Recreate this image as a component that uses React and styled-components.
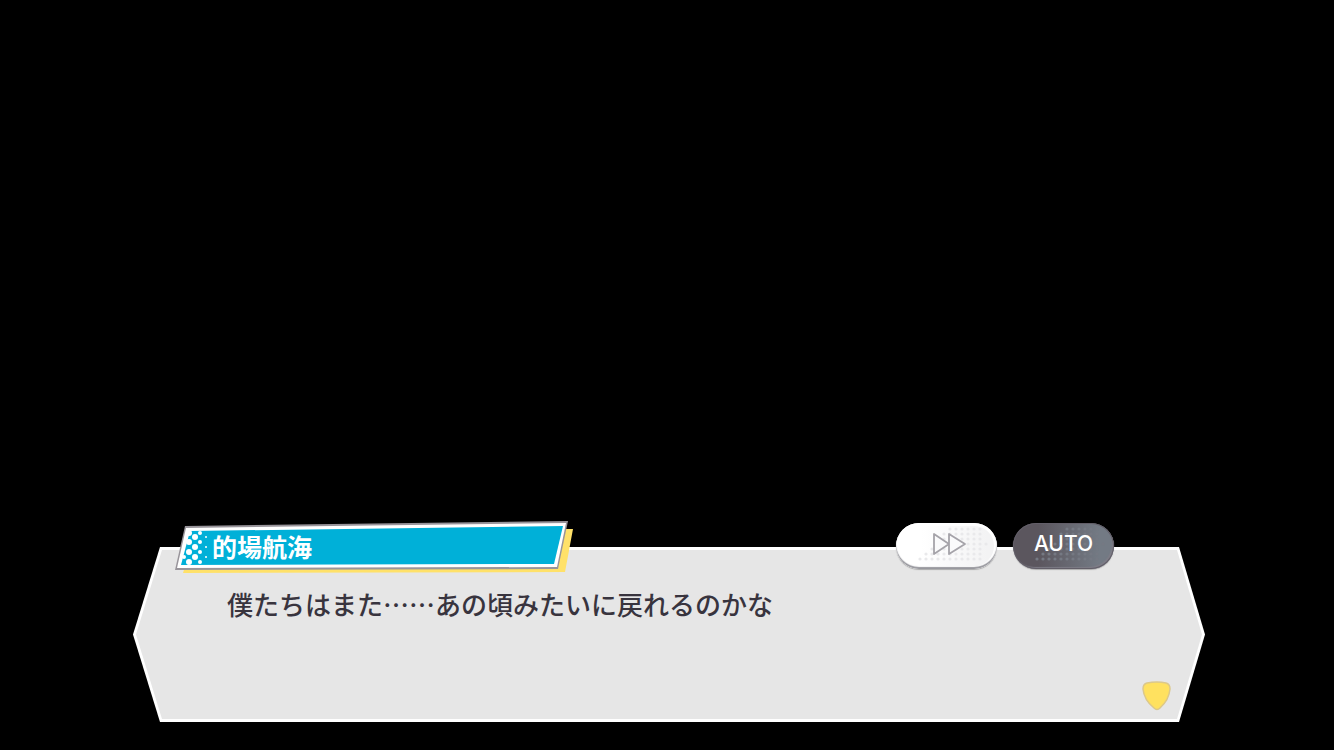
import styled, { createGlobalStyle } from 'styled-components';

const GlobalStyle = createGlobalStyle`
  * {
    box-sizing: border-box;
  }

  body {
    margin: 0;
    background: #000;
    font-family: 'Noto Sans CJK JP', 'Noto Sans', sans-serif;
  }
`;

const Stage = styled.main`
  display: flex;
  flex-direction: column;
  justify-content: flex-end;
  min-height: 100vh;
  padding: 0 129px 28px 133px;
`;

const Dialogue = styled.section`
  display: flex;
  flex-direction: column;
`;

const DialogueHeader = styled.header`
  position: relative;
  z-index: 1;
  display: flex;
  justify-content: space-between;
  align-items: flex-start;
  margin-bottom: -27px;
  padding: 0 91px 0 42px;
`;

const NamePlate = styled.div`
  position: relative;
  flex: 0 1 398px;
  height: 53px;
`;

const PlateLayer = styled.div`
  position: absolute;
  inset: 0;
  background: ${({ $color }) => $color};
  clip-path: polygon(${({ $shape }) => $shape});
`;

const PlateDots = styled.svg`
  position: absolute;
  left: 0;
  top: 0;
  width: 40px;
  height: 53px;
`;

const Speaker = styled.h2`
  position: relative;
  margin: 0;
  padding-left: 37px;
  font-size: 25px;
  font-weight: 700;
  line-height: 50px;
  color: #fff;
`;

const Controls = styled.div`
  display: flex;
  gap: 16px;
  padding-top: 2px;
`;

const ControlButton = styled.button`
  position: relative;
  width: 101px;
  height: 46px;
  padding: 0 0 4px;
  border: none;
  border-radius: 23px;
  overflow: hidden;
  font-family: Inter, sans-serif;
  font-size: 21px;
  font-weight: 500;
  line-height: 40px;
  color: #fff;
  background: ${({ $dark }) =>
    $dark ? 'linear-gradient(90deg, #5b565e 25%, #737a84 85%)' : 'linear-gradient(90deg, #fff 25%, #f3f3f4 90%)'};
  box-shadow: ${({ $dark }) =>
    $dark
      ? 'inset 0 0 0 1px #625e68, inset -2px -2px 1px #7d7c86, 0 1px 1px #aaa'
      : 'inset 0 -2px 1px #98989e, inset 0 0 0 3px #fff, 0 1px 1px #aaa'};
  cursor: pointer;
`;

const ButtonArt = styled.svg`
  position: absolute;
  inset: 0;
  width: 100%;
  height: 100%;
`;

const ButtonText = styled.span`
  position: relative;
`;

const Frame = styled.div`
  min-height: 175px;
  padding: 3px;
  background: #fff;
  clip-path: polygon(27px 0, calc(100% - 26px) 0, 100% 50%, calc(100% - 26px) 100%, 27px 100%, 0 50%);
`;

const FrameBody = styled.div`
  display: flex;
  flex-direction: column;
  justify-content: space-between;
  min-height: 169px;
  padding: 35px 30px 8px 91px;
  background: #e6e6e6;
  clip-path: polygon(26px 0, calc(100% - 25px) 0, 100% 50%, calc(100% - 25px) 100%, 26px 100%, 0 50%);
`;

const Line = styled.p`
  margin: 0;
  font-size: 26px;
  font-weight: 500;
  line-height: 38px;
  color: #38343e;
`;

const NextButton = styled.button`
  align-self: flex-end;
  width: 30px;
  height: 30px;
  padding: 0;
  border: none;
  background: none;
  cursor: pointer;

  svg {
    display: block;
  }
`;

const shapes = {
  shadow: '18px 20px, calc(100% - 20px) 8px, 100% 8px, calc(100% - 8px) 51px, 8px 52px',
  outline: '10px 5px, calc(100% - 5px) 0, calc(100% - 15px) 48px, 0 49px',
  border: '11px 7px, calc(100% - 7px) 2px, calc(100% - 16px) 46px, 2px 47px',
  fill: '15px 10px, calc(100% - 10px) 5px, calc(100% - 19px) 43px, 6px 44px',
};

const plateColumns = [
  { x: 9, r: 2, ys: [36] },
  { x: 14, r: 3, ys: [12, 21, 31, 41] },
  { x: 20, r: 3, ys: [16, 26, 36] },
  { x: 25, r: 2, ys: [12, 21, 31, 41] },
  { x: 31, r: 1, ys: [16, 26, 36] },
];

// Halftone band that climbs from the lower left to the upper right of a button
const buttonDots = [];
for (let row = 0; row < 7; row += 1) {
  for (let col = 0; col < 12; col += 1) {
    const x = 24 + col * 6;
    const y = 6 + row * 5;
    if (x > 52 - row * 5 && x < 92 - Math.abs(row - 3) * 2) buttonDots.push({ x, y });
  }
}

function HalftoneArt({ color, children }) {
  return (
    <ButtonArt viewBox="0 0 101 46" aria-hidden="true">
      <g fill={color}>
        {buttonDots.map(({ x, y }) => (
          <circle key={`${x}-${y}`} cx={x} cy={y} r="1.6" />
        ))}
      </g>
      {children}
    </ButtonArt>
  );
}

function App() {
  return (
    <>
      <GlobalStyle />
      <Stage>
        <Dialogue>
          <DialogueHeader>
            <NamePlate>
              <PlateLayer $color="#ffe169" $shape={shapes.shadow} />
              <PlateLayer $color="#98949a" $shape={shapes.outline} />
              <PlateLayer $color="#fff" $shape={shapes.border} />
              <PlateLayer $color="#00b0d8" $shape={shapes.fill} />
              <PlateDots viewBox="0 0 40 53" aria-hidden="true">
                {plateColumns.map(({ x, r, ys }) =>
                  ys.map((y) => <circle key={`${x}-${y}`} cx={x} cy={y} r={r} fill="#fff" />)
                )}
              </PlateDots>
              <Speaker>的場航海</Speaker>
            </NamePlate>

            <Controls>
              <ControlButton type="button" aria-label="Fast forward">
                <HalftoneArt color="#e9e9eb">
                  <g fill="#fafafb" stroke="#a5a3a9" strokeWidth="1.8" strokeLinejoin="round">
                    <path d="M38 11v20l15-10z" />
                    <path d="M53 11v20l16-10z" />
                  </g>
                </HalftoneArt>
              </ControlButton>
              <ControlButton type="button" $dark>
                <HalftoneArt color="#757983" />
                <ButtonText>AUTO</ButtonText>
              </ControlButton>
            </Controls>
          </DialogueHeader>

          <Frame>
            <FrameBody>
              <Line>僕たちはまた……あの頃みたいに戻れるのかな</Line>
              <NextButton type="button" aria-label="Next">
                <svg viewBox="0 0 30 30" width="30" height="30" aria-hidden="true">
                  <path
                    d="M5 2Q15 0 24 2Q28 3 28 8Q27 19 18 27Q15 30 12 27Q2 19 1 8Q1 3 5 2z"
                    fill="#ffe15f"
                    stroke="#dcc88a"
                    strokeWidth="1.5"
                  />
                </svg>
              </NextButton>
            </FrameBody>
          </Frame>
        </Dialogue>
      </Stage>
    </>
  );
}

export default App;
